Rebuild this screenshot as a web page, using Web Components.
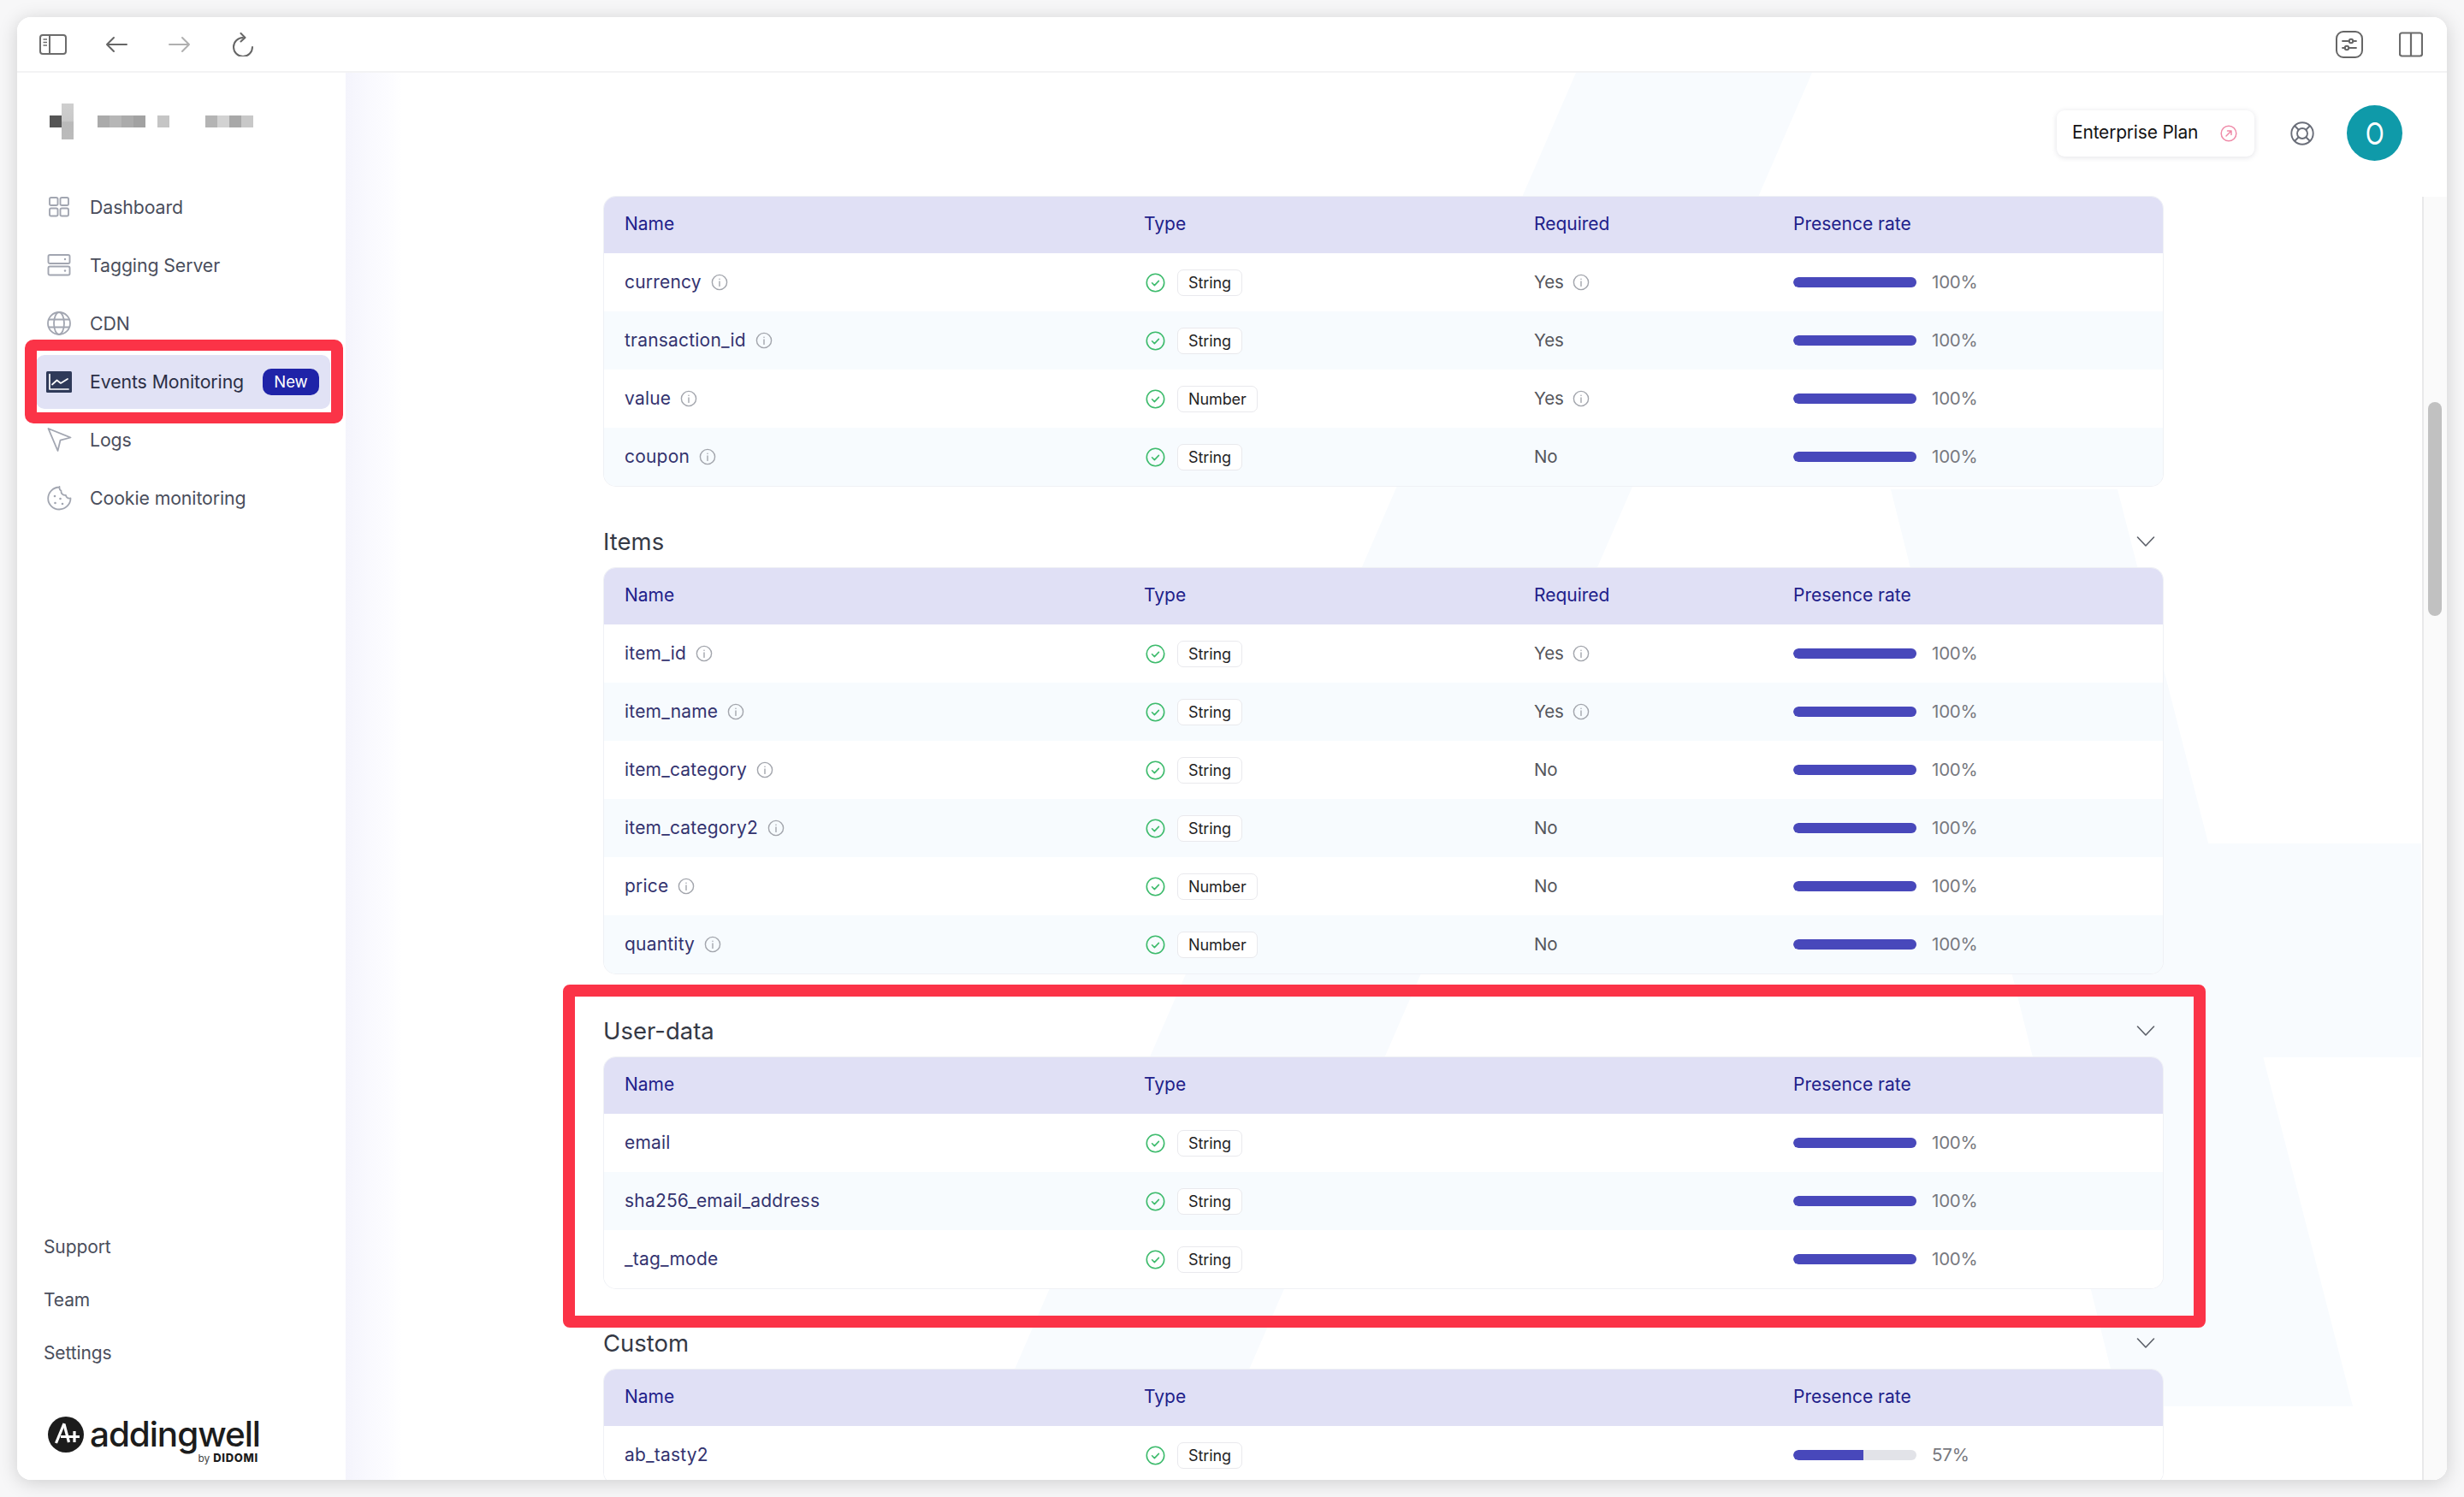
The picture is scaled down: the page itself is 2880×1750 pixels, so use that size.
<!DOCTYPE html>
<html lang="en">
<head>
<meta charset="utf-8">
<title>Events Monitoring</title>
<style>
html,body{margin:0;padding:0;height:1750px;overflow:hidden;background:#f7f7f8;font-family:"Inter","Liberation Sans",sans-serif;}
</style>
</head>
<body>
<app-window>
  <browser-bar slot="bar"></browser-bar>
  <side-nav slot="side">
    <blur-brand slot="brand"></blur-brand>
    <nav-item icon="grid">Dashboard</nav-item>
    <nav-item icon="server">Tagging Server</nav-item>
    <nav-item icon="globe">CDN</nav-item>
    <nav-item icon="chart" active badge="New">Events Monitoring</nav-item>
    <nav-item icon="plane">Logs</nav-item>
    <nav-item icon="cookie">Cookie monitoring</nav-item>
    <foot-link slot="foot">Support</foot-link>
    <foot-link slot="foot">Team</foot-link>
    <foot-link slot="foot">Settings</foot-link>
    <brand-logo slot="logo"></brand-logo>
  </side-nav>
  <main-panel slot="main">
    <top-actions slot="top"></top-actions>
    <data-table>
      <data-row name="currency" info type="String" req="Yes" reqinfo pct="100"></data-row>
      <data-row name="transaction_id" info type="String" req="Yes" pct="100"></data-row>
      <data-row name="value" info type="Number" req="Yes" reqinfo pct="100"></data-row>
      <data-row name="coupon" info type="String" req="No" pct="100"></data-row>
    </data-table>
    <data-section heading="Items" gap="96">
      <data-table>
        <data-row name="item_id" info type="String" req="Yes" reqinfo pct="100"></data-row>
        <data-row name="item_name" info type="String" req="Yes" reqinfo pct="100"></data-row>
        <data-row name="item_category" info type="String" req="No" pct="100"></data-row>
        <data-row name="item_category2" info type="String" req="No" pct="100"></data-row>
        <data-row name="price" info type="Number" req="No" pct="100"></data-row>
        <data-row name="quantity" info type="Number" req="No" pct="100"></data-row>
      </data-table>
    </data-section>
    <data-section heading="User-data" gap="98" highlight>
      <data-table no-required>
        <data-row name="email" type="String" pct="100"></data-row>
        <data-row name="sha256_email_address" type="String" pct="100"></data-row>
        <data-row name="_tag_mode" type="String" pct="100"></data-row>
      </data-table>
    </data-section>
    <data-section heading="Custom" gap="95">
      <data-table no-required>
        <data-row name="ab_tasty2" type="String" pct="57"></data-row>
      </data-table>
    </data-section>
  </main-panel>
</app-window>

<script>
const FONT = '"Inter","Liberation Sans",sans-serif';
function comp(tag, html){
  customElements.define(tag, class extends HTMLElement{
    constructor(){super();this.attachShadow({mode:'open'});}
    connectedCallback(){
      this.shadowRoot.innerHTML = typeof html==='function'?html(this):html;
    }
  });
}
const INFO = `<svg width="20" height="20" viewBox="0 0 20 20" fill="none" stroke="#a2a5ac" stroke-width="1.4"><circle cx="10" cy="10" r="8.6"/><path d="M10 9v5.4" stroke-linecap="round"/><circle cx="10" cy="6.200" r=".8" fill="#a2a5ac" stroke="none"/></svg>`;
const CHECK = `<svg width="23" height="23" viewBox="0 0 23 23" fill="none" stroke="#3dbb6c" stroke-width="1.6" stroke-linecap="round" stroke-linejoin="round"><circle cx="11.5" cy="11.5" r="10.2"/><path d="M7.6 11.8l2.8 2.8 5-5.2"/></svg>`;
const CHEV = `<svg width="22" height="12" viewBox="0 0 22 12" fill="none" stroke="#5b5f68" stroke-width="1.6" stroke-linecap="round" stroke-linejoin="round"><path d="M1.500 1l9.500 10L20.500 1"/></svg>`;
const ICONS = {
 grid:`<svg width="28" height="28" viewBox="0 0 28 28" fill="none" stroke="#a2a6b1" stroke-width="1.9"><rect x="3" y="3" width="9.5" height="9" rx="1.8"/><rect x="15.5" y="3" width="9.5" height="9" rx="1.8"/><rect x="3" y="15.5" width="9.5" height="9" rx="1.8"/><rect x="15.5" y="15.5" width="9.5" height="9" rx="1.8"/></svg>`,
 server:`<svg width="28" height="28" viewBox="0 0 28 28" fill="none" stroke="#a2a6b1" stroke-width="1.9"><rect x="1.5" y="2" width="25" height="10" rx="1.8"/><rect x="1.5" y="15.5" width="25" height="10" rx="1.8"/><circle cx="21" cy="7" r="1.200" fill="#a2a6b1" stroke="none"/><circle cx="21" cy="20.5" r="1.200" fill="#a2a6b1" stroke="none"/></svg>`,
 globe:`<svg width="28" height="28" viewBox="0 0 28 28" fill="none" stroke="#a2a6b1" stroke-width="1.8"><circle cx="14" cy="14" r="13"/><ellipse cx="14" cy="14" rx="6" ry="13"/><path d="M2 9.5h24M2 18.5h24"/></svg>`,
 chart:`<svg width="30" height="25" viewBox="0 0 30 25"><rect width="30" height="25" rx="1.5" fill="#2f3a59"/><path d="M4 3.5v17.5h22M7 15.5l5.5-5 4.5 3.5 8-5" fill="none" stroke="#fff" stroke-width="1.7" stroke-linecap="round" stroke-linejoin="round"/></svg>`,
 plane:`<svg width="29" height="30" viewBox="0 0 29 30" fill="none" stroke="#a2a6b1" stroke-width="1.8" stroke-linejoin="round"><path d="M1.5 2L27.5 12.5l-12 3.2L12.5 28z"/></svg>`,
 cookie:`<svg width="29" height="29" viewBox="0 0 29 29" fill="none" stroke="#a2a6b1" stroke-width="1.8" stroke-linejoin="round"><path d="M14.500 1.500C7.300 1.500 1.200 7.400 1.200 14.800 1.200 22 7.200 27.500 14.200 27.500c7.200 0 13.300-5.800 13.300-13-2.900.5-5-1-5.600-3.600-3.200.3-5.900-1.900-5.400-5.200-1.700-.9-2.300-2.800-2-4.700z"/><circle cx="9" cy="12" r="1.300" fill="#a2a6b1" stroke="none"/><circle cx="15.500" cy="15" r="1.300" fill="#a2a6b1" stroke="none"/><circle cx="9.500" cy="20" r="1.300" fill="#a2a6b1" stroke="none"/><circle cx="18" cy="21" r="1.300" fill="#a2a6b1" stroke="none"/></svg>`
};

comp('app-window', `<style>
:host{display:block;box-sizing:border-box;height:1750px;padding:20px;font-family:${FONT};}
.win{height:100%;display:flex;flex-direction:column;background:#fff;border-radius:16px;overflow:hidden;box-shadow:0 3px 22px rgba(0,0,0,.17);}
.body{flex:1;min-height:0;display:flex;}
</style><div class="win"><slot name="bar"></slot><div class="body"><slot name="side"></slot><slot name="main"></slot></div></div>`);

comp('browser-bar', `<style>
:host{display:flex;flex:none;box-sizing:border-box;height:65px;align-items:center;padding:0 28px 0 26px;border-bottom:2px solid #f3f3f4;background:#fff;}
svg{display:block;flex:none}
.sp{flex:1}
</style>
<svg width="32" height="24" viewBox="0 0 32 24" fill="none" stroke="#6c6c6c" stroke-width="2"><rect x="1" y="1" width="30" height="22" rx="3"/><path d="M12 1v22"/><path d="M4.500 6h4.500M4.500 9.500h4.500M4.500 13h4.500" stroke-width="1.500"/></svg>
<svg style="margin-left:45px" width="26" height="20" viewBox="0 0 26 20" fill="none" stroke="#666" stroke-width="2" stroke-linecap="round" stroke-linejoin="round"><path d="M25 10H2M10 2l-8 8 8 8"/></svg>
<svg style="margin-left:48px" width="26" height="20" viewBox="0 0 26 20" fill="none" stroke="#b0b0b0" stroke-width="2" stroke-linecap="round" stroke-linejoin="round"><path d="M1 10h23M16 2l8 8-8 8"/></svg>
<svg style="margin-left:48px" width="26" height="28" viewBox="0 0 26 28" fill="none" stroke="#666" stroke-width="2" stroke-linecap="round" stroke-linejoin="round"><path d="M13 6a11 11 0 1 0 11 11"/><path d="M10.500 1l5 5-5 4.500"/></svg>
<div class="sp"></div>
<svg width="32" height="32" viewBox="0 0 32 32" fill="none" stroke="#666" stroke-width="2" stroke-linecap="round"><rect x="1" y="1" width="30" height="30" rx="8"/><path d="M8 12h8M20 12h4M8 20h3M15 20h9" stroke-width="1.800"/><circle cx="18" cy="12" r="2.200"/><circle cx="13" cy="20" r="2.200"/></svg>
<svg style="margin-left:42px" width="28" height="30" viewBox="0 0 28 30" fill="none" stroke="#6c6c6c" stroke-width="2.200"><rect x="1" y="1.500" width="26" height="27" rx="2.500"/><path d="M14 1.500v27"/></svg>`);

comp('side-nav', `<style>
:host{display:flex;flex-direction:column;flex:none;box-sizing:border-box;width:384px;background:#fff;position:relative;padding-bottom:18px;}
.brand{height:105px;padding:36px 0 0 38px;box-sizing:border-box;}
.items{display:flex;flex-direction:column;margin:0 0 0 22px;padding-top:18px;width:344px;}
.sp{flex:1}
.foot{display:flex;flex-direction:column;padding-left:31px;}
.logo{padding:44px 0 0 36px;}
</style>
<div class="brand"><slot name="brand"></slot></div>
<div class="items"><slot></slot></div>
<div class="sp"></div>
<div class="foot"><slot name="foot"></slot></div>
<div class="logo"><slot name="logo"></slot></div>`);

comp('blur-brand', `<style>
:host{display:block;height:42px;width:260px;}
.r{height:42px;display:flex;align-items:center;}
i{display:block;width:14px;height:14px;flex:none}
.col{width:14px;height:42px;background:linear-gradient(#cfcfcf 0,#c9c9c9 48%,#b9b9b9 52%,#bbb);flex:none}
</style><div class="r"><i style="background:#555"></i><div class="col"></div>
<i style="margin-left:28px;background:#aaa"></i><i style="background:#b6b6b6"></i><i style="background:#ababab"></i><i style="background:#a2a2a2"></i>
<i style="margin-left:14px;background:#c5c5c5"></i>
<i style="margin-left:42px;background:#b4b4b4"></i><i style="background:#d2d2d2"></i><i style="background:#a8a8a8"></i><i style="background:#c8c8c8"></i></div>`);

comp('nav-item', el=>{
  const active = el.hasAttribute('active');
  const badge = el.getAttribute('badge');
  return `<style>
  :host{display:flex;align-items:center;height:68px;box-sizing:border-box;position:relative;font-size:21.3px;color:${active?'#2b2f45':'#4a4e5c'};letter-spacing:-.1px;}
  .bg{display:flex;align-items:center;flex:1;height:${active?'63px':'68px'};padding-left:20px;border-radius:10px;${active?'background:#e1e2f5;':''}}
  .t{margin-left:21px;flex:1;white-space:nowrap;padding-bottom:1px}
  .b{background:#1f23a8;color:#fff;font-size:18.5px;height:31px;width:66px;border-radius:10px;display:flex;align-items:center;justify-content:center;margin-right:13px;letter-spacing:0}
  .red{position:absolute;left:-13px;top:-15px;width:344px;height:72px;border-style:solid;border-color:#fb3347;border-width:13px 14px;border-radius:10px;pointer-events:none}
  .ic2{width:30px;flex:none;margin-left:-8px;display:flex;justify-content:center}
  </style>
  <div class="bg"><span class="ic2">${ICONS[el.getAttribute('icon')]}</span><span class="t"><slot></slot></span>${badge?`<span class="b">${badge}</span>`:''}</div>
  ${active?'<div class="red"></div>':''}`;
});

comp('foot-link', `<style>
:host{display:flex;align-items:center;height:62px;font-size:21px;color:#4a4e5c;letter-spacing:-.1px;}
</style><slot></slot>`);

comp('brand-logo', `<style>
:host{display:block;width:270px;}
.top{display:flex;align-items:center;gap:7px;height:42px;}
svg{display:block;flex:none}
.w{font-size:40.5px;font-weight:500;color:#1c1c1c;letter-spacing:-1.1px;line-height:42px;}
.by{display:flex;justify-content:flex-end;align-items:baseline;gap:4px;width:246px;font-size:12px;color:#444;margin-top:-2px;height:16px;line-height:16px}
.by b{font-size:13px;font-weight:800;color:#1c1c1c;letter-spacing:.7px}
</style>
<div class="top"><svg width="42" height="42" viewBox="0 0 42 42"><circle cx="21" cy="21" r="21" fill="#1c1c1c"/><path d="M9.500 31L19 8" stroke="#fff" stroke-width="3.200" fill="none"/><path d="M19 9L24.500 30M15 23.500H37M31 17v13" stroke="#fff" stroke-width="3.200" fill="none"/></svg><span class="w">addingwell</span></div>
<div class="by"><span>by</span><b>DIDOMI</b></div>`);

comp('main-panel', `<style>
:host{display:block;flex:1;min-width:0;position:relative;overflow:hidden;background:linear-gradient(90deg,#f4f4fc 0,#f9f9fe 26px,#fcfcff 50px,#fff 66px);}
.mark{position:absolute;left:0;top:0;width:2457px;height:1645px;}
.top{position:relative;}
.row{position:relative;display:flex;height:1500px;}
.content{width:1822px;margin-left:302px;flex:none;}
.track{position:absolute;right:0;top:0;width:29px;height:100%;box-sizing:border-box;background:#fafafa;border-left:2px solid #e9e9ea;}
.thumb{position:absolute;left:5px;top:240px;width:16px;height:250px;border-radius:8px;background:#c1c1c1;}
</style>
<svg class="mark" viewBox="0 0 2457 1645" aria-hidden="true"><g fill="#f8fbfe">
<path d="M1438 0H1714L1000 1645H726z"/>
<path d="M1806 487H2071L2346 1559H2074z"/>
<path d="M2175 901H2426V1151H2240z"/></g></svg>
<div class="top"><slot name="top"></slot></div>
<div class="row"><div class="content"><slot></slot></div><div class="track"><div class="thumb"></div></div></div>`);

comp('top-actions', `<style>
:host{display:flex;height:145px;box-sizing:border-box;align-items:center;justify-content:flex-end;padding:0 52px 4px 0;}
.plan{display:flex;align-items:center;box-sizing:border-box;width:231px;height:54px;padding:0 20px 0 18px;background:#fff;border-radius:9px;box-shadow:0 1px 6px rgba(30,30,60,.13);font-size:21px;color:#141414;letter-spacing:-.2px;white-space:nowrap}
.plan span{flex:1;padding-bottom:2px}
.lb{margin-left:42px;display:block}
.av{margin-left:38px;width:65px;height:65px;border-radius:50%;background:#0f9aa9;color:#fff;display:flex;align-items:center;justify-content:center;font-size:36px;}
.av span{display:block;transform:scaleX(.8)}
</style>
<div class="plan"><span>Enterprise Plan</span><svg width="20" height="20" viewBox="0 0 20 20" fill="none" stroke="#ef8aa8" stroke-width="1.500" stroke-linecap="round" stroke-linejoin="round"><circle cx="10" cy="10" r="8.800"/><path d="M7 13l6-6M8.500 7H13v4.500"/></svg></div>
<svg class="lb" width="28" height="28" viewBox="0 0 28 28" fill="none" stroke="#6a6e79" stroke-width="1.900"><circle cx="14" cy="14" r="12.700"/><circle cx="14" cy="14" r="6"/><path d="M5 5l5 5M23 5l-5 5M5 23l5-5M23 23l-5-5"/></svg>
<div class="av"><span>O</span></div>`);

comp('data-section', el=>`<style>
:host{display:block;position:relative;}
.hd{display:flex;align-items:flex-end;justify-content:space-between;height:${el.getAttribute('gap')}px;box-sizing:border-box;padding:0 0 15px 0;}
h2{margin:0 0 0 -1px;font-size:27.5px;font-weight:400;line-height:32px;color:#353945;letter-spacing:0;}
.ch{padding-right:9px;padding-bottom:10px;display:flex}
.red{position:absolute;left:-48px;top:13px;width:1892px;height:373px;border:14px solid #fb3347;border-radius:8px;pointer-events:none;}
</style>
<div class="hd"><h2>${el.getAttribute('heading')}</h2><span class="ch">${CHEV}</span></div>
<slot></slot>
${el.hasAttribute('highlight')?'<div class="red"></div>':''}`);

comp('data-table', el=>{
  const req = !el.hasAttribute('no-required');
  return `<style>
  :host{display:block;border-radius:14px;box-shadow:0 0 0 1px #eff1f5;background:#fff;}
  .clip{border-radius:14px;overflow:hidden}
  .h{display:grid;grid-template-columns:607px 456px 303px 1fr;padding:0 0 3px 24px;box-sizing:border-box;height:66px;align-items:center;background:#e0e0f5;color:#21218a;font-size:21px;letter-spacing:0;}
  </style>
  <div class="clip"><div class="h"><span>Name</span><span>Type</span><span>${req?'Required':''}</span><span>Presence rate</span></div><slot></slot></div>`;
});

comp('data-row', el=>{
  const a = n=>el.getAttribute(n);
  const p = +a('pct');
  return `<style>
  :host{display:grid;grid-template-columns:608px 455px 303px 1fr;padding-left:24px;height:68px;align-items:center;background:#fff;font-size:20.500px;letter-spacing:-.2px;}
  :host(:nth-child(even)){background:#f7fbfe;}
  .n{display:flex;align-items:center;gap:11px;color:#33336f;font-size:21px;letter-spacing:.2px}
  .n span,.r span,.p span{padding-bottom:2px}
  .t{display:flex;align-items:center;}
  .t svg{margin-left:1px;display:block}
  .tag{margin-left:14px;height:31px;padding:0 12px;box-sizing:border-box;display:flex;align-items:center;background:#fff;border:1px solid #e9e9ed;border-radius:7px;color:#1f1f24;font-size:18px;letter-spacing:-.1px;}
  .r{display:flex;align-items:center;gap:10px;color:#55565c;}
  .p{display:flex;align-items:center;gap:18px;color:#77787e;}
  .bar{width:144px;height:12px;border-radius:6px;background:#e2e3e8;overflow:hidden}
  .bar i{display:block;height:100%;background:#4848bb;border-radius:6px 0 0 6px}
  svg{display:block;flex:none}
  </style>
  <div class="n"><span>${a('name')}</span>${el.hasAttribute('info')?INFO:''}</div>
  <div class="t">${CHECK}<span class="tag">${a('type')}</span></div>
  <div class="r">${a('req')?`<span>${a('req')}</span>`:''}${el.hasAttribute('reqinfo')?INFO:''}</div>
  <div class="p"><div class="bar"><i style="width:${p}%"></i></div><span>${p}%</span></div>`;
});
</script>
</body>
</html>
